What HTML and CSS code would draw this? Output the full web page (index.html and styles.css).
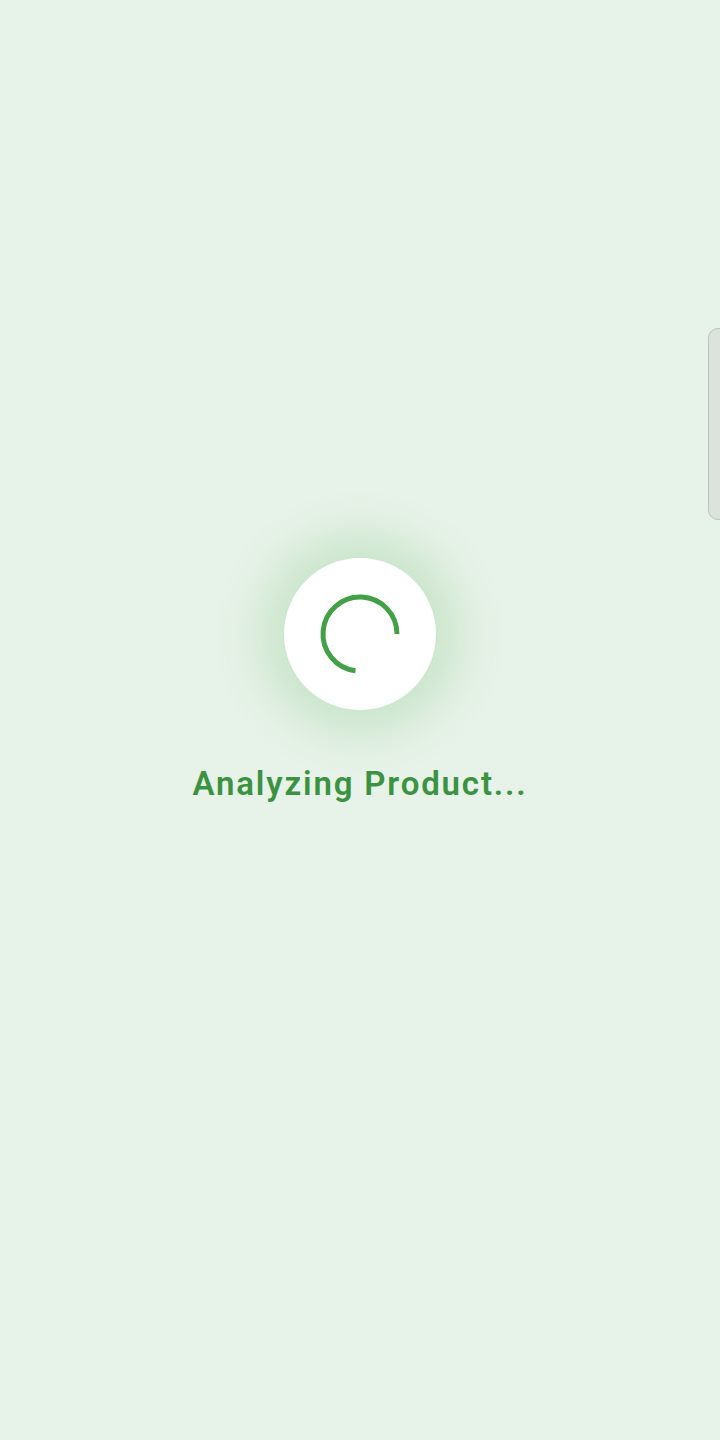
FILE: index.html
```html
<!DOCTYPE html>
<html>
<head>
<meta charset="utf-8">
<link rel="stylesheet" href="styles.css">
</head>
<body>
<main class="screen">
  <div class="loader">
    <div class="glow">
      <svg class="spinner" width="84" height="84" viewBox="0 0 84 84">
        <path d="M 79 42 A 37 37 0 1 0 37.5 78.7" fill="none" stroke="#43a047" stroke-width="5"/>
      </svg>
    </div>
    <h1 class="label">Analyzing Product...</h1>
  </div>
  <div class="side-tab"></div>
</main>
</body>
</html>
```
FILE: styles.css
```css
html, body {
  margin: 0;
  padding: 0;
}
body {
  background: #e7f2e8;
  font-family: Roboto, "Noto Sans", sans-serif;
}
.screen {
  width: 720px;
  height: 1440px;
  display: flex;
  justify-content: center;
  position: relative;
  overflow: hidden;
}
.loader {
  display: flex;
  flex-direction: column;
  align-items: center;
  padding-top: 558px;
}
.glow {
  width: 152px;
  height: 152px;
  border-radius: 50%;
  background: #ffffff;
  display: flex;
  align-items: center;
  justify-content: center;
  box-shadow: 0 0 48px 22px rgba(76, 175, 80, 0.2);
}
.label {
  margin: 52px 0 0 0;
  font-size: 33px;
  font-weight: 600;
  color: #3b9342;
  letter-spacing: 1.85px;
  line-height: 44px;
}
.side-tab {
  position: absolute;
  right: -10px;
  top: 328px;
  width: 20px;
  height: 190px;
  border: 1px solid #b9c3bb;
  border-radius: 10px;
  background: #dce3dd;
}
```
